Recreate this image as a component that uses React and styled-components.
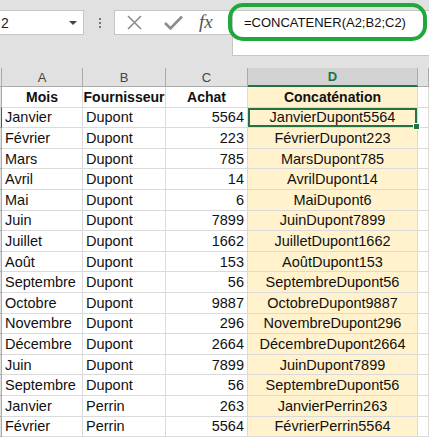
import React from "react";
import styled, { createGlobalStyle } from "styled-components";

const rows = [
  ["Janvier", "Dupont", 5564],
  ["Février", "Dupont", 223],
  ["Mars", "Dupont", 785],
  ["Avril", "Dupont", 14],
  ["Mai", "Dupont", 6],
  ["Juin", "Dupont", 7899],
  ["Juillet", "Dupont", 1662],
  ["Août", "Dupont", 153],
  ["Septembre", "Dupont", 56],
  ["Octobre", "Dupont", 9887],
  ["Novembre", "Dupont", 296],
  ["Décembre", "Dupont", 2664],
  ["Juin", "Dupont", 7899],
  ["Septembre", "Dupont", 56],
  ["Janvier", "Perrin", 263],
  ["Février", "Perrin", 5564]
];

const GlobalStyle = createGlobalStyle`
  body {
    margin: 0;
    width: 429px;
    height: 442px;
    overflow: hidden;
    background: #ffffff;
    font-family: "Liberation Sans", Arial, sans-serif;
  }
`;

const Page = styled.div`
  width: 429px;
  height: 442px;
  overflow: hidden;
  position: relative;
`;

/*************Formula bar************/
const Toolbar = styled.div`
  height: 68px;
  background: #e1e1e1;
  display: flex;
  align-items: flex-start;
  padding-top: 10px;
  box-sizing: border-box;
  position: relative;
`;

const NameBox = styled.div`
  width: 84px;
  height: 25px;
  background: #fff;
  border: 1px solid #c6c6c6;
  border-left: none;
  box-sizing: border-box;
  display: flex;
  align-items: center;
  justify-content: space-between;
  padding: 0 6px 0 1px;
  font-size: 14px;
  color: #222;
`;

const Caret = styled.span`
  width: 0;
  height: 0;
  border-left: 4px solid transparent;
  border-right: 4px solid transparent;
  border-top: 4px solid #444;
`;

const Grip = styled.div`
  width: 2px;
  margin: 8px 13px 0 15px;
  display: flex;
  flex-direction: column;
  gap: 2px;
  span {
    width: 2px;
    height: 2px;
    background: #777;
  }
`;

const Buttons = styled.div`
  width: 118px;
  height: 25px;
  background: #fff;
  border: 1px solid #c6c6c6;
  border-right: none;
  box-sizing: border-box;
  display: flex;
  align-items: center;
  padding-left: 11px;
`;

const Fx = styled.span`
  font-family: "Liberation Serif", "Times New Roman", serif;
  font-style: italic;
  font-size: 19px;
  color: #555;
  margin-left: 15px;
  margin-top: -2px;
`;

const FormulaInput = styled.div`
  flex: 1;
  height: 46px;
  background: #fff;
  border: 1px solid #c6c6c6;
  border-right: none;
  box-sizing: border-box;
  padding: 4px 0 0 11px;
  font-size: 13px;
  color: #111;
`;

const Highlight = styled.div`
  position: absolute;
  left: 228px;
  top: 3px;
  width: 199px;
  height: 38px;
  border: 4px solid #21a83c;
  border-radius: 15px;
  box-sizing: border-box;
`;

/*************Sheet************/
const Sheet = styled.div`
  display: grid;
  grid-template-columns: 2px 81px 83px 82px 170px 1fr;
  grid-template-rows: 19px;
  grid-auto-rows: 20.6px;
`;

const Head = styled.div`
  background: ${p => (p.active ? "#d2d2d2" : "#e1e1e1")};
  border-right: 1px solid #ababab;
  border-bottom: ${p => (p.active ? "2px solid #217346" : "1px solid #ababab")};
  box-sizing: border-box;
  display: flex;
  align-items: center;
  justify-content: center;
  font-size: 13px;
  font-weight: ${p => (p.active ? "bold" : "normal")};
  color: ${p => (p.active ? "#217346" : "#444")};
`;

const Cell = styled.div`
  position: relative;
  border-right: 1px solid #dadada;
  border-bottom: 1px solid #dadada;
  box-sizing: border-box;
  display: flex;
  align-items: center;
  padding: 0 3px;
  font-size: 14.5px;
  color: #111;
  white-space: nowrap;
  background: ${p => (p.fill ? "#fff2cc" : "#fff")};
  justify-content: ${p =>
    p.align === "right" ? "flex-end" : p.align === "center" ? "center" : "flex-start"};
  font-weight: ${p => (p.bold ? "bold" : "normal")};
  ${p => p.bold && "font-size: 14px;"}
  ${p => p.selected && "box-shadow: inset 0 0 0 2px #217346;"}
`;

const RowNum = styled.div`
  background: #e1e1e1;
  border-right: 1px solid ${p => (p.active ? "#217346" : "#ababab")};
  border-bottom: 1px solid #ababab;
  box-sizing: border-box;
`;

const Handle = styled.span`
  position: absolute;
  right: -3px;
  bottom: -3px;
  width: 5px;
  height: 5px;
  background: #217346;
  border: 1px solid #fff;
  z-index: 2;
`;

const XIcon = () => (
  <svg width="17" height="17" viewBox="0 0 17 17">
    <path d="M2 2 L15 15 M15 2 L2 15" stroke="#8c8c8c" strokeWidth="1.6" fill="none" />
  </svg>
);

const CheckIcon = () => (
  <svg width="21" height="17" viewBox="0 0 21 17" style={{ marginLeft: 20 }}>
    <path d="M2 9 L7.5 14.5 L19 2.5" stroke="#8c8c8c" strokeWidth="2.6" fill="none" />
  </svg>
);

const App = () => {
  return (
    <Page>
      <GlobalStyle />
      <Toolbar>
        <NameBox>
          <span>2</span>
          <Caret />
        </NameBox>
        <Grip>
          <span />
          <span />
          <span />
        </Grip>
        <Buttons>
          <XIcon />
          <CheckIcon />
          <Fx>fx</Fx>
        </Buttons>
        <FormulaInput>=CONCATENER(A2;B2;C2)</FormulaInput>
        <Highlight />
      </Toolbar>
      <Sheet>
        <Head />
        <Head>A</Head>
        <Head>B</Head>
        <Head>C</Head>
        <Head active>D</Head>
        <Head />

        <RowNum />
        <Cell bold align="center">Mois</Cell>
        <Cell bold align="center">Fournisseur</Cell>
        <Cell bold align="center">Achat</Cell>
        <Cell bold align="center" fill="1">Concaténation</Cell>
        <Cell />

        {rows.map(([mois, fournisseur, achat], i) => (
          <React.Fragment key={i}>
            <RowNum active={i === 0} />
            <Cell>{mois}</Cell>
            <Cell>{fournisseur}</Cell>
            <Cell align="right">{achat}</Cell>
            <Cell align="center" fill="1" selected={i === 0}>
              {mois + fournisseur + achat}
              {i === 0 && <Handle />}
            </Cell>
            <Cell />
          </React.Fragment>
        ))}
      </Sheet>
    </Page>
  );
};

export default App;
